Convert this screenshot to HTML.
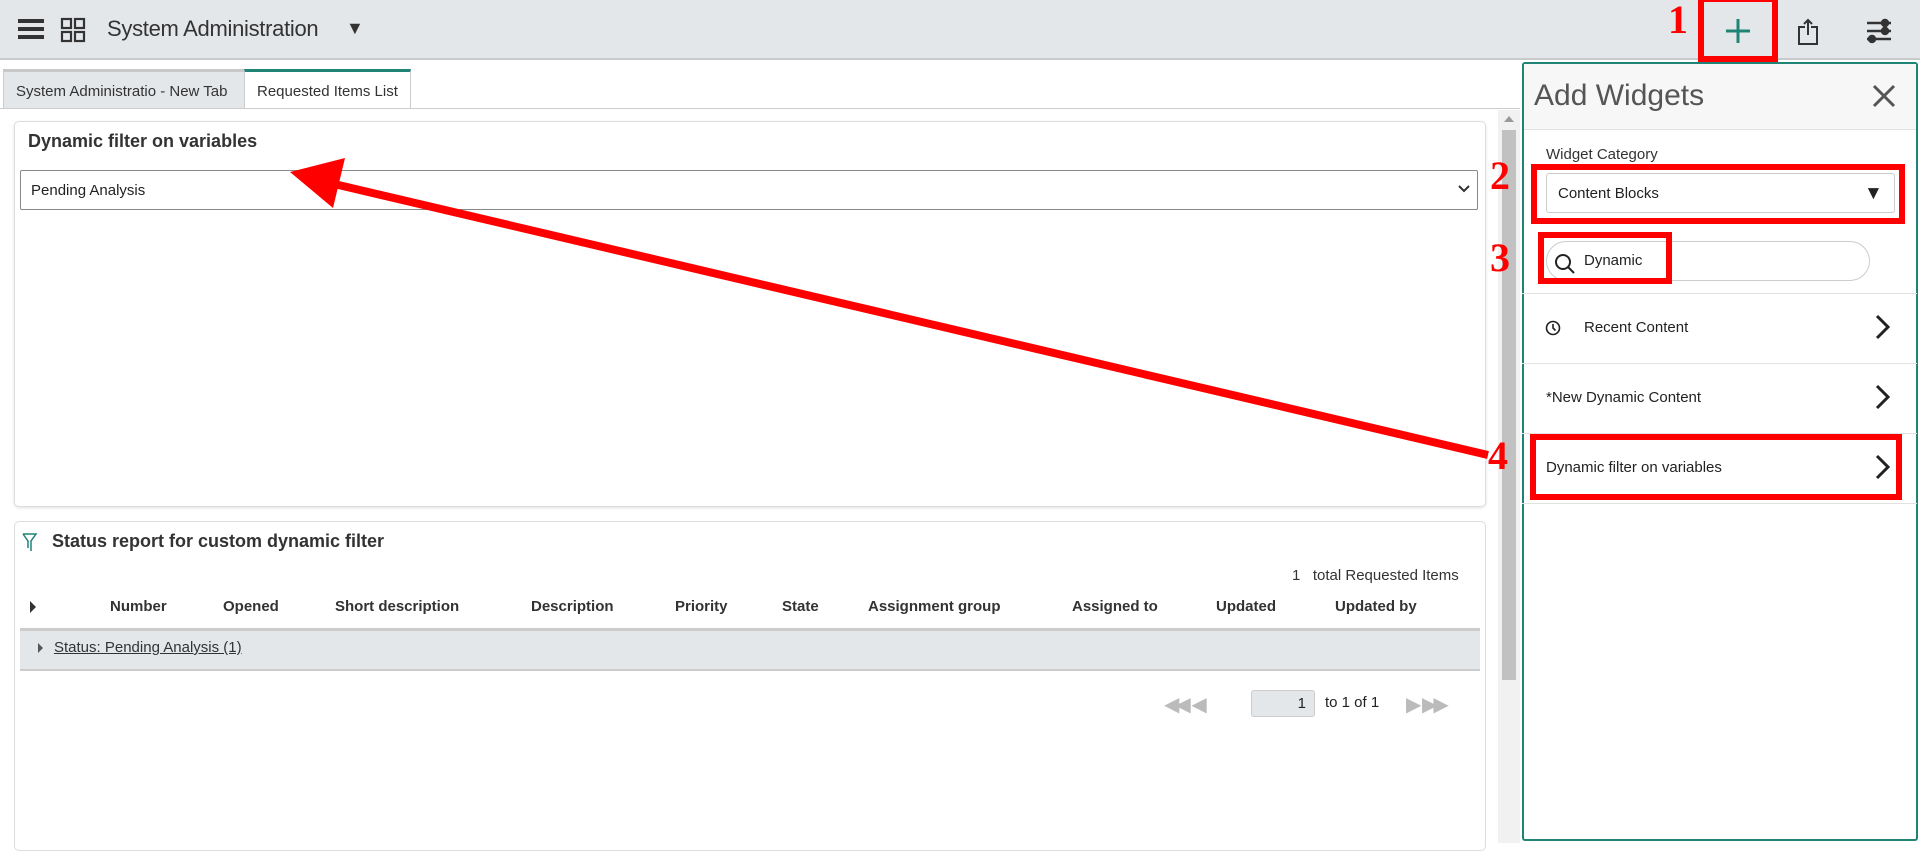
<!DOCTYPE html>
<html><head><meta charset="utf-8"><style>
*{box-sizing:border-box;margin:0;padding:0}
body{width:1920px;height:843px;overflow:hidden;background:#fff;font-family:"Liberation Sans",sans-serif;color:#222;position:relative}
.a{position:absolute}
.hdr{left:0;top:0;width:1920px;height:60px;background:#e4e7ea;border-bottom:2px solid #c8cacc}
.red{border:6px solid #f00}
.num{font-family:"Liberation Serif",serif;font-weight:bold;color:#f00;font-size:40px}
.th{top:598px;font-size:15px;font-weight:bold;color:#333}
.row{left:1522px;width:395px;border-top:1px solid #e2e2e2;font-size:15px}
</style></head><body>
<div class="a hdr"></div>
<div class="a" style="left:18px;top:19px;width:26px;height:4px;background:#333;box-shadow:0 8px 0 #333,0 16px 0 #333"></div>
<svg class="a" style="left:60px;top:17px" width="26" height="26" fill="none" stroke="#333" stroke-width="2.2"><rect x="2" y="2" width="9" height="9"/><rect x="15" y="2" width="9" height="9"/><rect x="2" y="15" width="9" height="9"/><rect x="15" y="15" width="9" height="9"/></svg>
<div class="a" style="left:107px;top:16px;font-size:22px;color:#333;letter-spacing:-0.3px">System Administration</div>
<div class="a" style="left:346px;top:18px;font-size:18px;color:#333">▼</div>
<div class="a red" style="left:1698px;top:-4px;width:80px;height:66px"></div>
<svg class="a" style="left:1724px;top:17px" width="28" height="28" stroke="#1f8476" stroke-width="3"><path d="M14 2V26M2 14H26"/></svg>
<svg class="a" style="left:1797px;top:18px" width="24" height="28" fill="none" stroke="#333" stroke-width="2"><path d="M8 9H2V26H20V9H14M11 2V17M7 6L11 2L15 6"/></svg>
<svg class="a" style="left:1866px;top:18px" width="26" height="26" stroke="#333" stroke-width="2.5"><path d="M1 5H25M1 13H25M1 21H25"/><circle cx="19" cy="5" r="3" fill="#333"/><circle cx="19" cy="13" r="3" fill="#333"/><circle cx="6" cy="21" r="3" fill="#333"/></svg>
<div class="a num" style="left:1668px;top:-4px">1</div>
<div class="a" style="left:3px;top:69px;width:241px;height:40px;background:#e4e7ea;border-top:3px solid #c8c8c8;border-left:1px solid #ccc;font-size:15px;padding:11px 0 0 12px;color:#333">System Administratio - New Tab</div>
<div class="a" style="left:244px;top:69px;width:167px;height:40px;background:#fff;border-top:3px solid #1f8476;border-left:1px solid #ccc;border-right:1px solid #ccc;font-size:15px;padding:11px 0 0 12px;color:#333">Requested Items List</div>
<div class="a" style="left:0;top:108px;width:1520px;height:1px;background:#ccc"></div>
<div class="a" style="left:14px;top:121px;width:1472px;height:386px;border:1px solid #ddd;border-radius:5px;box-shadow:0 1px 3px rgba(0,0,0,.12)"></div>
<div class="a" style="left:28px;top:131px;font-size:18px;font-weight:bold;color:#333">Dynamic filter on variables</div>
<div class="a" style="left:20px;top:170px;width:1458px;height:40px;border:1px solid #888;border-radius:2px;font-size:15px;padding:11px 0 0 10px">Pending Analysis</div>
<svg class="a" style="left:1458px;top:185px" width="12" height="8" fill="none" stroke="#333" stroke-width="2"><path d="M1 1L6 6L11 1"/></svg>
<div class="a" style="left:14px;top:521px;width:1472px;height:330px;border:1px solid #ddd;border-radius:5px"></div>
<svg class="a" style="left:22px;top:533px" width="16" height="20" fill="none" stroke="#1f8476" stroke-width="1.5"><path d="M1 1H14L9 8V18M1 1L6 8V15"/></svg>
<div class="a" style="left:52px;top:531px;font-size:18px;font-weight:bold;color:#333">Status report for custom dynamic filter</div>
<div class="a" style="left:1292px;top:567px;font-size:15px;color:#333">1 &nbsp; total Requested Items</div>
<div class="a" style="left:30px;top:601px;width:0;height:0;border-left:6px solid #333;border-top:6px solid transparent;border-bottom:6px solid transparent"></div>
<div class="a th" style="left:110px">Number</div>
<div class="a th" style="left:223px">Opened</div>
<div class="a th" style="left:335px">Short description</div>
<div class="a th" style="left:531px">Description</div>
<div class="a th" style="left:675px">Priority</div>
<div class="a th" style="left:782px">State</div>
<div class="a th" style="left:868px">Assignment group</div>
<div class="a th" style="left:1072px">Assigned to</div>
<div class="a th" style="left:1216px">Updated</div>
<div class="a th" style="left:1335px">Updated by</div>
<div class="a" style="left:20px;top:628px;width:1460px;height:43px;background:#e4e7ea;border-top:3px solid #ccc;border-bottom:2px solid #ccc"></div>
<div class="a" style="left:38px;top:643px;width:0;height:0;border-left:5px solid #555;border-top:5px solid transparent;border-bottom:5px solid transparent"></div>
<div class="a" style="left:54px;top:639px;font-size:15px;text-decoration:underline;color:#333">Status: Pending Analysis (1)</div>
<div class="a" style="left:1164px;top:692px;font-size:20px;color:#bbb;letter-spacing:-4px">◀◀ &nbsp; ◀</div>
<div class="a" style="left:1251px;top:690px;width:64px;height:27px;background:#e4e7ea;border:1px solid #ccc;border-radius:3px;font-size:15px;text-align:right;padding:4px 8px 0 0">1</div>
<div class="a" style="left:1325px;top:694px;font-size:15px">to 1 of 1</div>
<div class="a" style="left:1406px;top:692px;font-size:20px;color:#bbb;letter-spacing:-4px">▶ &nbsp; ▶▶</div>
<div class="a" style="left:1498px;top:110px;width:22px;height:733px;background:#f1f1f1"></div>
<div class="a" style="left:1502px;top:130px;width:14px;height:550px;background:#c1c1c1"></div>
<div class="a" style="left:1504px;top:116px;width:0;height:0;border-bottom:6px solid #999;border-left:5px solid transparent;border-right:5px solid transparent"></div>
<div class="a" style="left:1522px;top:62px;width:396px;height:779px;border:2px solid #1f8476;border-radius:3px;background:#fff"></div>
<div class="a" style="left:1524px;top:64px;width:392px;height:66px;background:#f7f7f7;border-bottom:1px solid #e2e2e2"></div>
<div class="a" style="left:1534px;top:79px;font-size:30px;color:#555">Add Widgets</div>
<svg class="a" style="left:1872px;top:84px" width="24" height="24" stroke="#555" stroke-width="3"><path d="M2 2L22 22M22 2L2 22"/></svg>
<div class="a" style="left:1546px;top:146px;font-size:15px;color:#333">Widget Category</div>
<div class="a" style="left:1546px;top:173px;width:349px;height:40px;border:1px solid #ccc;border-radius:3px;font-size:15px;padding:11px 0 0 11px">Content Blocks</div>
<div class="a" style="left:1864px;top:183px;font-size:19px">▼</div>
<div class="a red" style="left:1531px;top:164px;width:374px;height:60px"></div>
<div class="a" style="left:1546px;top:241px;width:324px;height:40px;border:1px solid #ccc;border-radius:20px;font-size:15px;padding:10px 0 0 37px">Dynamic</div>
<svg class="a" style="left:1554px;top:253px" width="24" height="24" fill="none" stroke="#222" stroke-width="2"><circle cx="9" cy="9" r="7"/><path d="M14 14L20 20"/></svg>
<div class="a red" style="left:1538px;top:232px;width:134px;height:52px"></div>
<div class="a row" style="top:293px;height:70px;padding:25px 0 0 62px">Recent Content</div>
<svg class="a" style="left:1545px;top:320px" width="16" height="16" fill="none" stroke="#222" stroke-width="1.6"><circle cx="8" cy="8" r="6.5"/><path d="M8 4V8L10.5 10.5"/></svg>
<div class="a row" style="top:363px;height:70px;padding:25px 0 0 24px">*New Dynamic Content</div>
<div class="a row" style="top:433px;height:70px;padding:25px 0 0 24px">Dynamic filter on variables</div>
<div class="a row" style="top:503px;height:1px"></div>
<svg class="a" style="left:1874px;top:314px" width="18" height="170" fill="none" stroke="#222" stroke-width="3"><path d="M3 2L14 13L3 24M3 72L14 83L3 94M3 142L14 153L3 164"/></svg>
<div class="a red" style="left:1530px;top:434px;width:372px;height:66px"></div>
<div class="a num" style="left:1490px;top:152px">2</div>
<div class="a num" style="left:1490px;top:234px">3</div>
<div class="a num" style="left:1488px;top:432px">4</div>
<svg class="a" style="left:0;top:0" width="1920" height="843"><line x1="1488" y1="455" x2="330" y2="183" stroke="#f00" stroke-width="8"/><polygon points="290,172 345,158 333,208" fill="#f00"/></svg>
</body></html>
